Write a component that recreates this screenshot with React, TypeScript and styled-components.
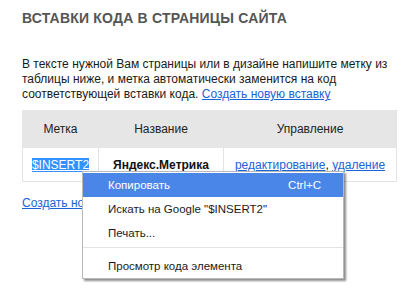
import styled, { createGlobalStyle } from "styled-components";

const GlobalStyle = createGlobalStyle`
  html, body {
    margin: 0;
    padding: 0;
    background: #ffffff;
  }
  body {
    font-family: "Liberation Sans", Arial, sans-serif;
    font-size: 12px;
    color: #1a1a1a;
  }
`;

const Page = styled.div`
  position: relative;
  width: 415px;
  height: 302px;
  padding: 10px 10px 0 22px;
  box-sizing: border-box;
  overflow: hidden;
`;

const Title = styled.h1`
  margin: 0;
  font-family: "Liberation Sans", Arial, sans-serif;
  font-size: 14px;
  line-height: 16px;
  font-weight: bold;
  color: #555555;
  letter-spacing: 0.2px;
`;

const Intro = styled.p`
  margin: 31px 0 0 0;
  font-size: 12px;
  line-height: 15px;
  color: #1a1a1a;
`;

const Link = styled.a`
  color: #1a63d8;
  text-decoration: underline;
  cursor: pointer;
`;

const Table = styled.table`
  margin-top: 8px;
  width: 371px;
  border-collapse: collapse;
  table-layout: fixed;
  font-size: 12px;
`;

const Th = styled.th<{ $w: number }>`
  width: ${(p) => p.$w}px;
  height: 36px;
  padding: 0;
  background: #e6e6e6;
  font-weight: normal;
  color: #222;
  text-align: center;
  border: 1px solid #e6e6e6;
`;

const Td = styled.td<{ $bold?: boolean }>`
  height: 33px;
  padding: 0;
  text-align: center;
  border: 1px solid #e3e3e3;
  font-weight: ${(p) => (p.$bold ? "bold" : "normal")};
  color: #111;
`;

const Selected = styled.span`
  background: #3390ff;
  color: #ffffff;
  text-decoration: underline;
`;

const Below = styled.div`
  margin-top: 14px;
`;

const Menu = styled.ul`
  position: absolute;
  left: 82px;
  top: 171px;
  width: 260px;
  margin: 0;
  padding: 1px 0 0 0;
  list-style: none;
  background: #ffffff;
  border: 1px solid #b9b9b9;
  box-shadow: 2px 2px 2px rgba(0, 0, 0, 0.45);
  font-size: 11.5px;
`;

const Item = styled.li<{ $active?: boolean }>`
  display: flex;
  justify-content: space-between;
  align-items: center;
  height: 24px;
  padding: 0 22px 0 25px;
  background: ${(p) => (p.$active ? "#4a86e8" : "transparent")};
  color: ${(p) => (p.$active ? "#ffffff" : "#1a1a1a")};
`;

const Separator = styled.li`
  height: 1px;
  margin: 2px 0 6px 0;
  background: #e3e3e3;
`;

const App = () => {
  return (
    <>
      <GlobalStyle />
      <Page>
        <Title>ВСТАВКИ КОДА В СТРАНИЦЫ САЙТА</Title>
        <Intro>
          В тексте нужной Вам страницы или в дизайне напишите метку из
          таблицы ниже, и метка автоматически заменится на код
          соответствующей вставки кода. <Link>Создать новую вставку</Link>
        </Intro>
        <Table>
          <thead>
            <tr>
              <Th $w={75}>Метка</Th>
              <Th $w={124}>Название</Th>
              <Th $w={172}>Управление</Th>
            </tr>
          </thead>
          <tbody>
            <tr>
              <Td>
                <Selected>$INSERT2</Selected>
              </Td>
              <Td $bold>Яндекс.Метрика</Td>
              <Td>
                <Link>редактирование</Link>, <Link>удаление</Link>
              </Td>
            </tr>
          </tbody>
        </Table>
        <Below>
          <Link>Создать новую вставку</Link>
        </Below>
        <Menu>
          <Item $active>
            <span>Копировать</span>
            <span>Ctrl+C</span>
          </Item>
          <Item>Искать на Google "$INSERT2"</Item>
          <Item>Печать...</Item>
          <Separator />
          <Item>Просмотр кода элемента</Item>
        </Menu>
      </Page>
    </>
  );
};

export default App;
